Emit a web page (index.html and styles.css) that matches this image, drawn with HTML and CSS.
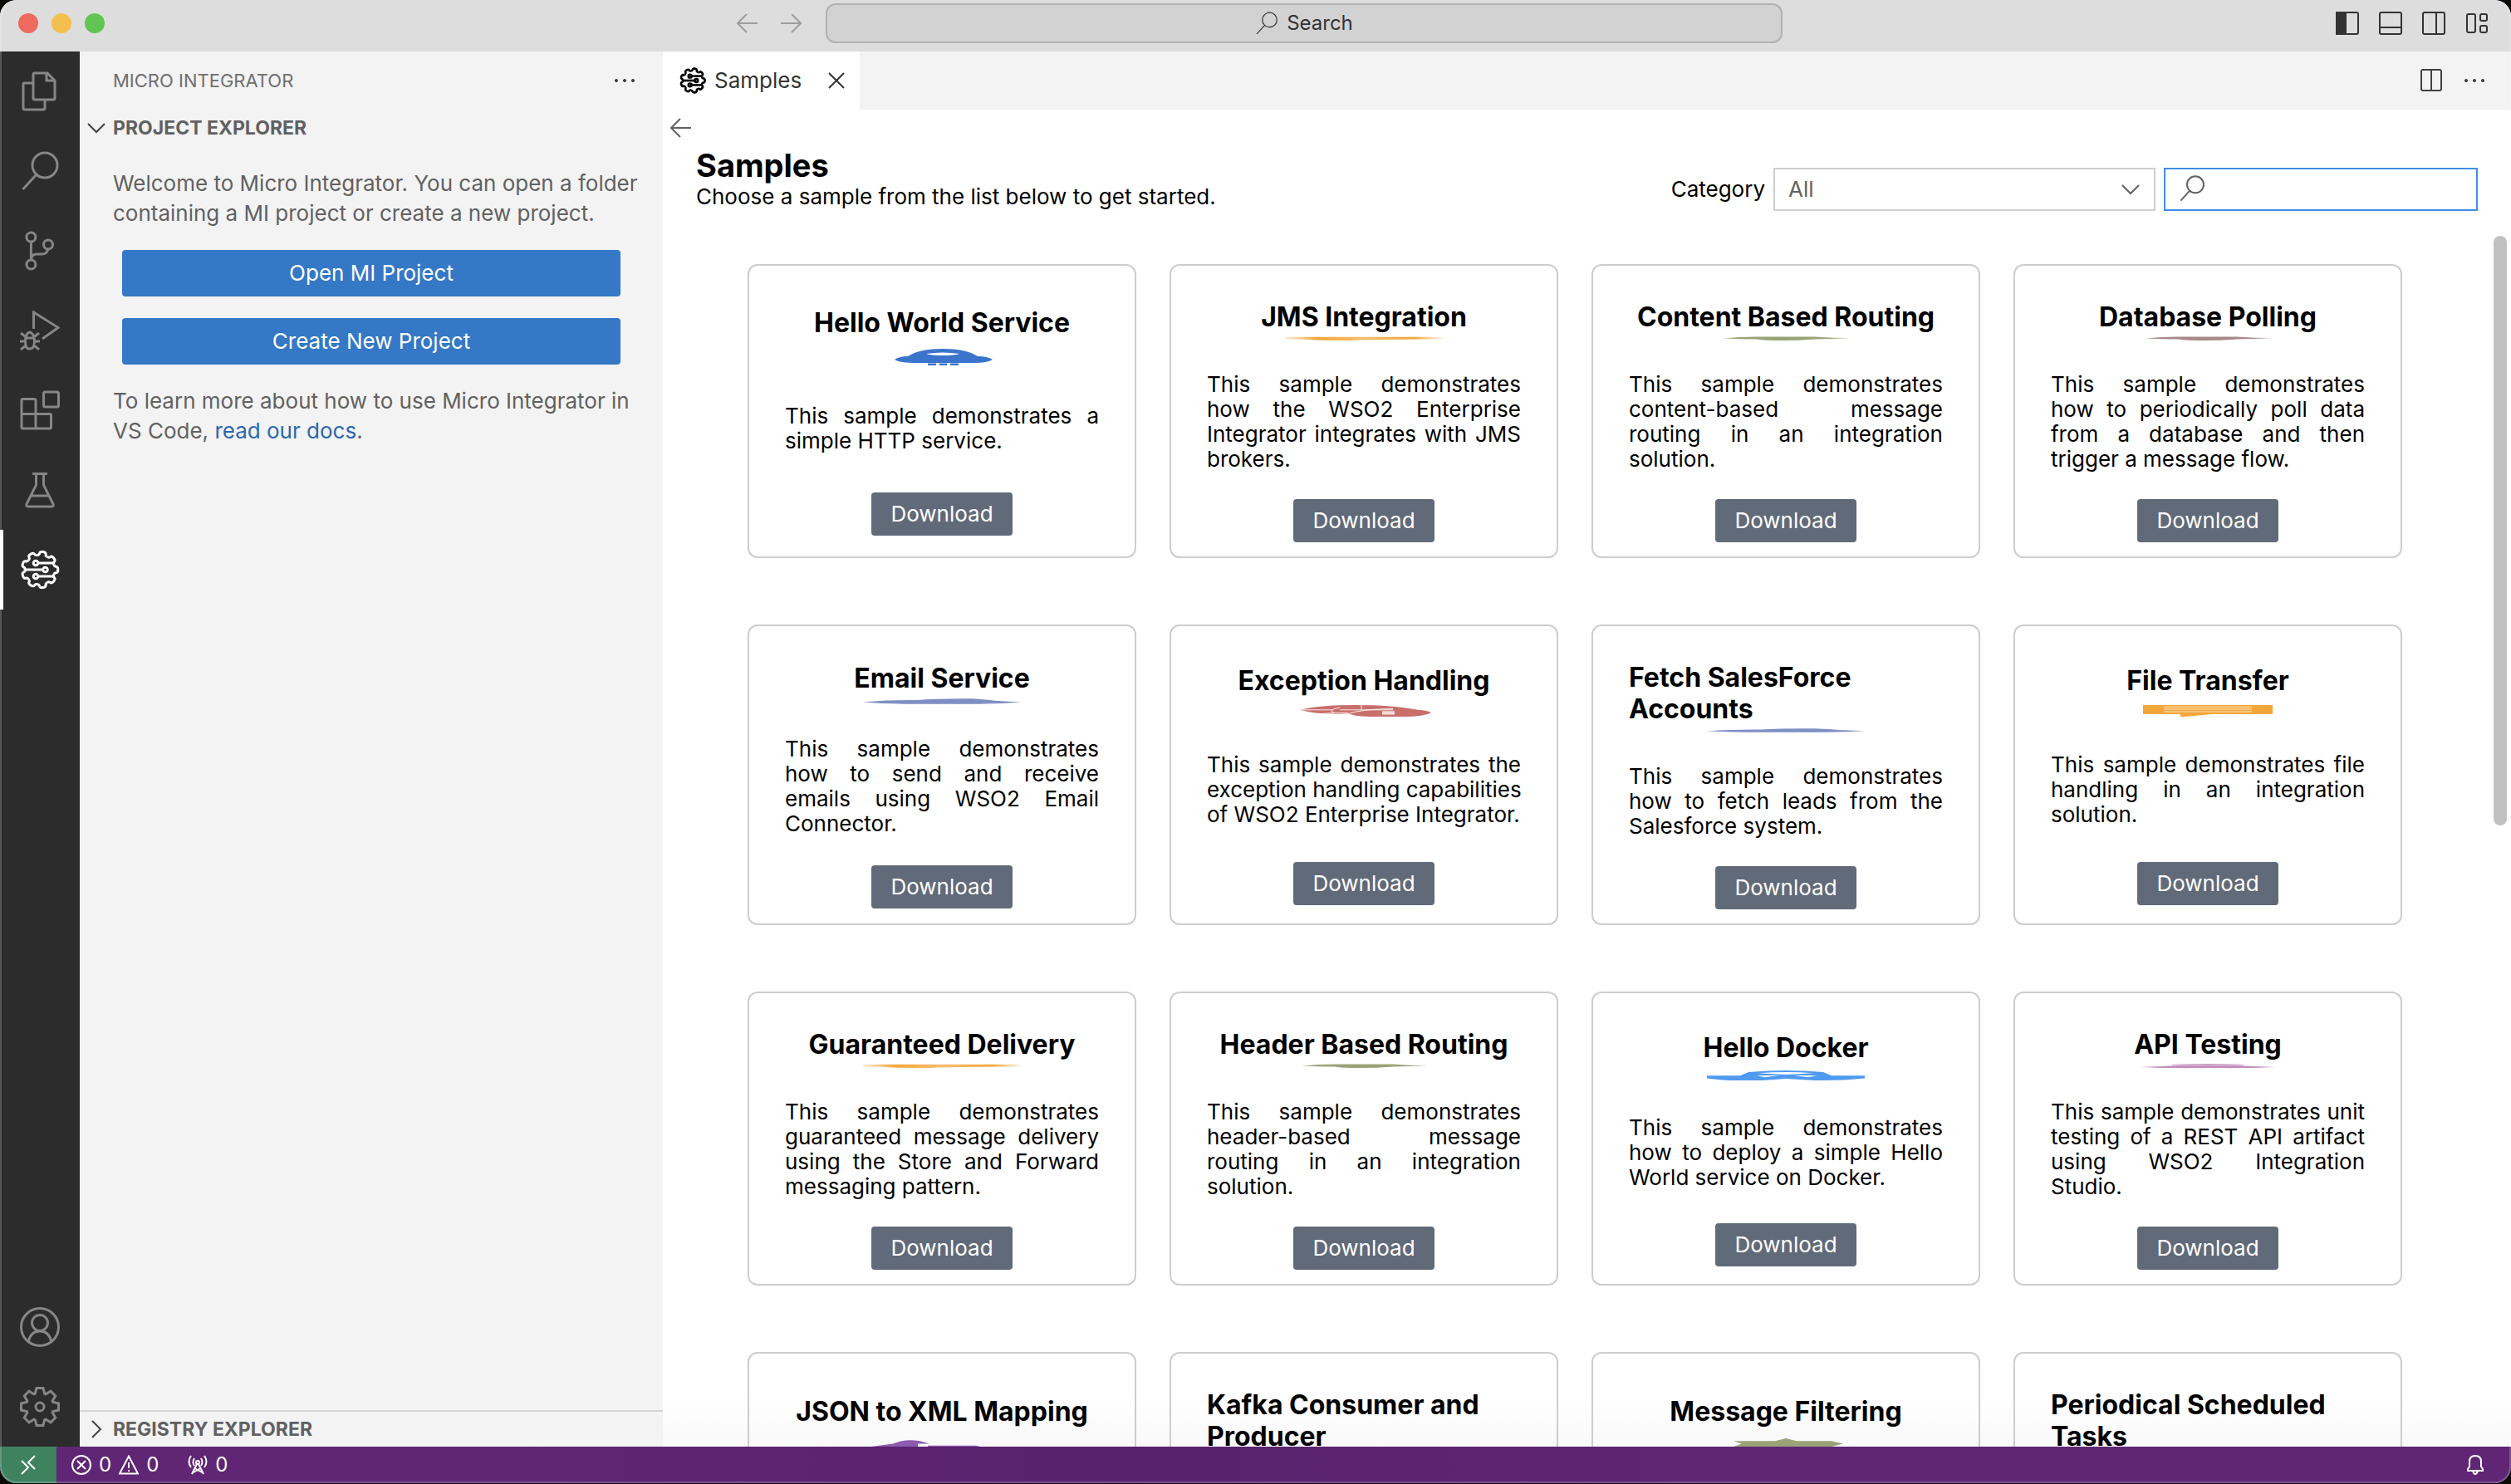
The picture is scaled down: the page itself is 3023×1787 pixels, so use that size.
FILE: index.html
```html
<!DOCTYPE html>
<html lang="en">
<head>
<meta charset="utf-8">
<title>Samples</title>
<link rel="stylesheet" href="styles.css">
</head>
<body>
<svg class="defs" aria-hidden="true">
  <defs>
    <path id="mi-tooth" d="M16.9-6.2Q17.3-3.8 19.5-3.8Q21.8-3.6 21.8 0Q21.8 3.6 19.5 3.8Q17.3 3.8 16.9 6.2"/>
    <path id="gear-tooth" d="M14.5-6L22.5-4V4L14.5 6"/>
    <symbol id="i-mi" viewBox="0 0 48 48">
      <g transform="translate(24 24)">
        <use href="#mi-tooth"/><use href="#mi-tooth" transform="rotate(40)"/><use href="#mi-tooth" transform="rotate(80)"/>
        <use href="#mi-tooth" transform="rotate(120)"/><use href="#mi-tooth" transform="rotate(160)"/><use href="#mi-tooth" transform="rotate(200)"/>
        <use href="#mi-tooth" transform="rotate(240)"/><use href="#mi-tooth" transform="rotate(280)"/><use href="#mi-tooth" transform="rotate(320)"/>
      </g>
      <circle cx="19" cy="16" r="2.8"/><path d="M22 16H41"/>
      <circle cx="30.5" cy="24" r="2.8"/><path d="M6 24H27.5"/>
      <circle cx="19" cy="32" r="2.8"/><path d="M22 32H41"/>
    </symbol>
    <symbol id="i-search" viewBox="0 0 48 48"><circle cx="30" cy="17" r="15"/><path d="M20 28L3.500 46"/></symbol>
    <symbol id="i-left" viewBox="0 0 32 32"><path d="M15 5L4 16L15 27M4 16H28"/></symbol>
    <symbol id="i-right" viewBox="0 0 32 32"><path d="M17 5L28 16L17 27M28 16H4"/></symbol>
    <symbol id="i-dots" viewBox="0 0 32 32"><circle cx="6" cy="16" r="1.600"/><circle cx="16" cy="16" r="1.600"/><circle cx="26" cy="16" r="1.600"/></symbol>
    <linearGradient id="g-orange"><stop offset="0" stop-color="#f4a63a" stop-opacity=".2"/><stop offset=".2" stop-color="#f4a63a"/><stop offset=".5" stop-color="#f8bd70"/><stop offset=".82" stop-color="#f4a63a"/><stop offset="1" stop-color="#f4a63a" stop-opacity=".1"/></linearGradient>
    <symbol id="a-swoosh" viewBox="0 0 190 20" preserveAspectRatio="none"><path fill="url(#g-orange)" d="M0 3H190V14H160Q90 16 80 20Q40 20 20 14H0z"/></symbol>
    <symbol id="a-leaf" viewBox="0 0 190 20" preserveAspectRatio="none"><path fill="currentColor" d="M20 10Q40 2 60 2H130Q150 8 172 8Q150 12 130 14Q110 20 90 20Q70 20 60 14Q40 14 20 10z"/></symbol>
    <symbol id="a-cloud" viewBox="0 0 190 20" preserveAspectRatio="none"><path fill="currentColor" d="M0 13Q30 5 65 6Q90 0 130 1Q150 4 158 8L190 13Q170 18 140 19H50Q20 18 0 13z"/></symbol>
  </defs>
</svg>

<div class="window">
  <header class="titlebar">
    <div class="lights"><span class="light red"></span><span class="light yellow"></span><span class="light green"></span></div>
    <nav class="history" aria-label="History">
      <button class="plain" aria-label="Back"><svg class="icon s32"><use href="#i-left"/></svg></button>
      <button class="plain" aria-label="Forward"><svg class="icon s32"><use href="#i-right"/></svg></button>
    </nav>
    <button class="command"><svg class="icon s28"><use href="#i-search"/></svg>Search</button>
    <div class="layout-tools">
      <button class="plain" aria-label="Toggle side bar"><svg class="icon s32" viewBox="0 0 32 32"><rect x="3" y="3" width="26" height="26" rx="2"/><path class="solid" d="M3 3H14V29H3z"/></svg></button>
      <button class="plain" aria-label="Toggle panel"><svg class="icon s32" viewBox="0 0 32 32"><rect x="3" y="3" width="26" height="26" rx="2"/><path d="M3 21H29"/></svg></button>
      <button class="plain" aria-label="Toggle secondary side bar"><svg class="icon s32" viewBox="0 0 32 32"><rect x="3" y="3" width="26" height="26" rx="2"/><path d="M19 3V29"/></svg></button>
      <button class="plain" aria-label="Customize layout"><svg class="icon s32" viewBox="0 0 32 32"><rect x="4" y="5" width="10" height="22" rx="2"/><rect x="20" y="5" width="8" height="8" rx="2"/><rect x="20" y="19" width="8" height="8" rx="2"/></svg></button>
    </div>
  </header>

  <div class="workbench">
    <nav class="activity" aria-label="Views">
      <button class="view" aria-label="Explorer"><svg class="icon s48" viewBox="0 0 48 48"><path d="M17 2H33L42 11V32Q42 34 40 34H18Q16 34 16 32V3zM32 2V11H42M16 14H5Q4 14 4 16V44Q4 46 6 46H28Q30 46 30 44V34"/></svg></button>
      <button class="view" aria-label="Search"><svg class="icon s48"><use href="#i-search"/></svg></button>
      <button class="view" aria-label="Source control"><svg class="icon s48" viewBox="0 0 48 48"><circle cx="13.400" cy="7.500" r="5.500"/><circle cx="34" cy="16.500" r="5.500"/><circle cx="13.400" cy="40.500" r="5.500"/><path d="M13.400 13V35Q14 28 20 28H27Q32 28 34 22"/></svg></button>
      <button class="view" aria-label="Run and debug"><svg class="icon s48" viewBox="0 0 48 48"><path d="M16.500 22V2L46 20.500L27 34"/><path d="M12 26Q6.500 27 6.500 37T12 46Q17.500 46 17.500 37T12 26zM7 33H17M1 27L6 31M23 27L18 31M0 37H6M18 37H24M1 47L7 42M23 47L17 42"/></svg></button>
      <button class="view" aria-label="Extensions"><svg class="icon s48" viewBox="0 0 48 48"><path d="M19 28.500V12Q19 10.500 17.500 10.500H3.500Q2 10.500 2 12V44.500Q2 46 3.500 46H36Q37.500 46 37.500 44.500V30Q37.500 28.500 36 28.500H2M19 28.500V46"/><rect x="28.500" y="2" width="18" height="18" rx="2"/></svg></button>
      <button class="view" aria-label="Testing"><svg class="icon s48" viewBox="0 0 48 48"><path d="M15 4.500H33M19.500 4.500V18L8 41Q7 44 10 44H38Q41 44 40 41L28.500 18V4.500M13.500 31H34.500"/></svg></button>
      <button class="view active" aria-label="Micro Integrator"><svg class="icon s48"><use href="#i-mi"/></svg></button>
      <span class="spacer"></span>
      <button class="view" aria-label="Accounts"><svg class="icon s48" viewBox="0 0 48 48"><circle cx="24" cy="24" r="22.500"/><circle cx="24" cy="19" r="9.500"/><path d="M10.500 41Q13 29 24 29T37.500 41"/></svg></button>
      <button class="view" aria-label="Manage"><svg class="icon s48" viewBox="0 0 48 48"><g transform="translate(24 24)"><use href="#gear-tooth"/><use href="#gear-tooth" transform="rotate(45)"/><use href="#gear-tooth" transform="rotate(90)"/><use href="#gear-tooth" transform="rotate(135)"/><use href="#gear-tooth" transform="rotate(180)"/><use href="#gear-tooth" transform="rotate(225)"/><use href="#gear-tooth" transform="rotate(270)"/><use href="#gear-tooth" transform="rotate(315)"/><circle r="5"/></g></svg></button>
    </nav>

    <aside class="sidebar">
      <div class="sidebar-title"><span>MICRO INTEGRATOR</span><button class="plain" aria-label="More actions"><svg class="icon s32 dots"><use href="#i-dots"/></svg></button></div>
      <button class="section"><svg class="icon s24" viewBox="0 0 24 24"><path d="M2 7L12 17L22 7"/></svg>PROJECT EXPLORER</button>
      <div class="welcome">
        <p>Welcome to Micro Integrator. You can open a folder containing a MI project or create a new project.</p>
        <button class="primary">Open MI Project</button>
        <button class="primary">Create New Project</button>
        <p>To learn more about how to use Micro Integrator in VS Code, <a href="#docs">read our docs</a>.</p>
      </div>
      <span class="spacer"></span>
      <button class="section registry"><svg class="icon s24" viewBox="0 0 24 24"><path d="M7 2L17 12L7 22"/></svg>REGISTRY EXPLORER</button>
    </aside>

    <section class="editor">
      <div class="tabs">
        <div class="tab"><svg class="icon s32 tab-mark"><use href="#i-mi"/></svg><span>Samples</span><button class="plain" aria-label="Close tab"><svg class="icon s24" viewBox="0 0 24 24"><path d="M3 3L21 21M21 3L3 21"/></svg></button></div>
        <div class="tab-tools">
          <button class="plain" aria-label="Split editor"><svg class="icon s32" viewBox="0 0 32 32"><rect x="4" y="3" width="24" height="25" rx="2"/><path d="M16 3V28"/></svg></button>
          <button class="plain" aria-label="More actions"><svg class="icon s32 dots"><use href="#i-dots"/></svg></button>
        </div>
      </div>

      <main class="page">
        <div class="back-row"><button class="plain" aria-label="Back"><svg class="icon s32"><use href="#i-left"/></svg></button></div>
        <div class="page-head">
          <div><h1>Samples</h1><p>Choose a sample from the list below to get started.</p></div>
          <form class="filters">
            <label for="category">Category</label>
            <span class="field category"><select id="category"><option>All</option></select><svg class="icon s24" viewBox="0 0 24 24"><path d="M2 7L12 17L22 7"/></svg></span>
            <span class="field query"><svg class="icon s32"><use href="#i-search"/></svg><input type="text" aria-label="Search samples"></span>
          </form>
        </div>

        <div class="grid">
          <article class="card">
            <h2>Hello World Service</h2>
            <div class="art blue"><svg viewBox="0 0 190 20" preserveAspectRatio="none"><path fill="currentColor" fill-rule="evenodd" d="M38 13Q44 9 54 9Q68 0 96 0T138 9Q150 9 156 13Q150 17 134 17H64Q44 17 38 13zM76 6Q96 3 116 6Q110 8 96 8T76 6z"/><path fill="currentColor" d="M78 17.500H88V20H78zM92 17.500H101V20H92zM105 17.500H115V20H105z"/></svg></div>
            <p>This sample demonstrates a simple HTTP service.</p>
            <button class="download">Download</button>
          </article>
          <article class="card">
            <h2>JMS Integration</h2>
            <div class="art"><svg><use href="#a-swoosh"/></svg></div>
            <p>This sample demonstrates how the WSO2 Enterprise Integrator integrates with JMS brokers.</p>
            <button class="download">Download</button>
          </article>
          <article class="card">
            <h2>Content Based Routing</h2>
            <div class="art olive"><svg><use href="#a-leaf"/></svg></div>
            <p>This sample demonstrates content-based message routing in an integration solution.</p>
            <button class="download">Download</button>
          </article>
          <article class="card">
            <h2>Database Polling</h2>
            <div class="art brown"><svg><use href="#a-leaf"/></svg></div>
            <p>This sample demonstrates how to periodically poll data from a database and then trigger a message flow.</p>
            <button class="download">Download</button>
          </article>

          <article class="card">
            <h2>Email Service</h2>
            <div class="art indigo"><svg><use href="#a-cloud"/></svg></div>
            <p>This sample demonstrates how to send and receive emails using WSO2 Email Connector.</p>
            <button class="download">Download</button>
          </article>
          <article class="card">
            <h2>Exception Handling</h2>
            <div class="art red-art"><svg viewBox="0 0 190 20" preserveAspectRatio="none"><path fill="currentColor" d="M18 8Q40 0 85 0Q130 0 160 8Q172 9 176 13Q165 20 125 20Q85 20 76 14Q40 17 18 8z"/><path fill="none" stroke="#fff" stroke-width="1" d="M20 8H58M66 8H130M60 14Q50 8 66 4M75 15Q90 7 130 6M92 0V7M40 15Q60 12 76 13"/><path fill="#fff" fill-opacity=".75" d="M117 10H132V16H117z"/></svg></div>
            <p>This sample demonstrates the exception&nbsp;handling&nbsp;capabilities of WSO2 Enterprise Integrator.</p>
            <button class="download">Download</button>
          </article>
          <article class="card">
            <h2>Fetch SalesForce Accounts</h2>
            <div class="art indigo"><svg><use href="#a-cloud"/></svg></div>
            <p>This sample demonstrates how to fetch leads from the Salesforce system.</p>
            <button class="download">Download</button>
          </article>
          <article class="card">
            <h2>File Transfer</h2>
            <div class="art orange"><svg viewBox="0 0 190 20" preserveAspectRatio="none"><path fill="currentColor" d="M17 0H173V15H100L62 20V15H17z"/><path fill="none" stroke="#fbe3c0" stroke-width="1.500" d="M42 3H148M42 7H148M42 11H148"/></svg></div>
            <p>This sample demonstrates file handling in an integration solution.</p>
            <button class="download">Download</button>
          </article>

          <article class="card">
            <h2>Guaranteed Delivery</h2>
            <div class="art"><svg><use href="#a-swoosh"/></svg></div>
            <p>This sample demonstrates guaranteed message delivery using the Store and Forward messaging pattern.</p>
            <button class="download">Download</button>
          </article>
          <article class="card">
            <h2>Header Based Routing</h2>
            <div class="art olive"><svg><use href="#a-leaf"/></svg></div>
            <p>This sample demonstrates header-based message routing in an integration solution.</p>
            <button class="download">Download</button>
          </article>
          <article class="card">
            <h2>Hello Docker</h2>
            <div class="art sky"><svg viewBox="0 0 190 20" preserveAspectRatio="none"><path fill="currentColor" fill-rule="evenodd" d="M0 10H40L50 3Q95-3 140 3L150 10H190V15Q160 20 130 19L95 16L60 20Q20 20 0 15zM62 5Q95 1 128 5L95 8zM60 10L88 9L70 13zM104 9L132 10L122 13z"/></svg></div>
            <p>This sample demonstrates how to deploy a simple Hello World service on Docker.</p>
            <button class="download">Download</button>
          </article>
          <article class="card">
            <h2>API Testing</h2>
            <div class="art pink"><svg viewBox="0 0 190 20" preserveAspectRatio="none"><path fill="currentColor" d="M52 3Q95-3 138 3V6H52zM14 16Q40 12 60 8H130Q150 12 176 16L150 20H40z"/></svg></div>
            <p>This sample demonstrates unit testing of a REST API artifact using WSO2 Integration Studio.</p>
            <button class="download">Download</button>
          </article>

          <article class="card">
            <h2>JSON to XML Mapping</h2>
            <div class="art purple"><svg viewBox="0 0 190 20" preserveAspectRatio="none"><path fill="currentColor" d="M10 9L36 6Q56-2 80 6H66V20H48V9zM78 8H135Q146 9 146 14V20H74V14H124V11H78z"/></svg></div>
            <p>This sample demonstrates JSON to XML mapping.</p>
            <button class="download">Download</button>
          </article>
          <article class="card">
            <h2>Kafka Consumer and Producer</h2>
            <div class="art"><svg><use href="#a-leaf"/></svg></div>
            <p>This sample demonstrates how to produce and consume messages with Kafka.</p>
            <button class="download">Download</button>
          </article>
          <article class="card">
            <h2>Message Filtering</h2>
            <div class="art olive"><svg viewBox="0 0 190 20" preserveAspectRatio="none"><path fill="currentColor" d="M32 3H82L95 0L108 3H150L164 6L150 9H108V12H150L140 17H30L42 12H84V9H32L42 6z"/></svg></div>
            <p>This sample demonstrates message filtering.</p>
            <button class="download">Download</button>
          </article>
          <article class="card">
            <h2>Periodical Scheduled Tasks</h2>
            <div class="art indigo"><svg><use href="#a-leaf"/></svg></div>
            <p>This sample demonstrates how to schedule a task that runs periodically.</p>
            <button class="download">Download</button>
          </article>
        </div>
        <span class="scroll-thumb"></span>
      </main>
    </section>
  </div>

  <footer class="status">
    <button class="remote" aria-label="Remote window"><svg class="icon s24" viewBox="0 0 24 24"><path d="M4 7L12 15L4 23M20 1L12 9L20 17"/></svg></button>
    <button class="problems" aria-label="Problems"><svg class="icon s24" viewBox="0 0 24 24"><circle cx="12" cy="12" r="11"/><path d="M7 7L17 17M17 7L7 17"/></svg>0<svg class="icon s24" viewBox="0 0 24 24"><path d="M12 1.500L23 22.500H1zM12 9V16M12 18V20"/></svg>0</button>
    <button class="ports" aria-label="Forwarded ports"><svg class="icon s24" viewBox="0 0 24 24"><circle cx="12" cy="9" r="2"/><path d="M11 11L5 23M13 11L19 23M8.500 16L17 21M15.500 16L7 21M8 4Q5 9 8 13M16 4Q19 9 16 13M4 1Q-1 8 4 15M20 1Q25 8 20 15"/></svg>0</button>
    <span class="spacer"></span>
    <button class="bell" aria-label="Notifications"><svg class="icon s28" viewBox="0 0 28 28"><path d="M5 21V19L7 16V10Q7 3 14 3T21 10V16L23 19V21zM11 21Q12 25 14 25T17 21"/></svg></button>
  </footer>
</div>
</body>
</html>
```
FILE: styles.css
```css
* { box-sizing: border-box; }

body {
  margin: 0;
  padding-bottom: 1px;
  height: 100vh;
  background: #0c0a06;
  color: #000;
  font-family: Inter, "Liberation Sans", sans-serif;
  font-size: 26px;
  line-height: 30px;
}

h1, h2, p { margin: 0; }
button { font: inherit; color: inherit; border: 0; background: none; padding: 0; margin: 0; cursor: pointer; }
.defs { position: absolute; width: 0; height: 0; }
.spacer { flex: 1; }
.plain { display: flex; }

.icon { fill: none; stroke: currentColor; stroke-width: 2; flex: none; display: block; }
.icon .solid { fill: currentColor; }
.dots { fill: currentColor; stroke-width: 1; }
.s24 { width: 24px; height: 24px; }
.s28 { width: 28px; height: 28px; }
.s32 { width: 32px; height: 32px; }
.s48 { width: 48px; height: 48px; stroke-width: 3; }

.window {
  position: relative;
  display: flex;
  flex-direction: column;
  height: 100%;
  border-radius: 20px;
  overflow: hidden;
  background: #fff;
}
.window::after {
  content: "";
  position: absolute;
  inset: 0;
  border: 2px solid rgba(255, 255, 255, .2);
  border-top: 0;
  border-radius: 20px;
  pointer-events: none;
}

/* Title bar */
.titlebar {
  flex: none;
  display: grid;
  grid-template-columns: 872px 122px minmax(0, 1152px) 1fr;
  align-items: center;
  height: 62px;
  padding-bottom: 6px;
  background: #ddd;
  color: #333;
}
.lights { display: flex; gap: 16px; padding-left: 22px; }
.light { width: 24px; height: 24px; border-radius: 50%; }
.red { background: #ed6a5e; }
.yellow { background: #f5bf4f; }
.green { background: #61c554; }
.history { display: flex; gap: 20px; padding-left: 12px; color: #9d9d9d; }
.command {
  display: flex;
  align-items: center;
  justify-content: center;
  gap: 10px;
  height: 48px;
  border: 2px solid #b1b1b1;
  border-radius: 12px;
  background: #d2d2d2;
  font-size: 24px;
}
.layout-tools { display: flex; justify-content: flex-end; gap: 20px; padding-right: 25px; }

.workbench { flex: 1; min-height: 0; display: flex; }

/* Activity bar */
.activity { flex: none; width: 96px; display: flex; flex-direction: column; background: #2c2c2c; color: #868686; }
.view { height: 96px; display: grid; place-items: center; }
.view.active { color: #fff; box-shadow: inset 4px 0 #fff; }

/* Side bar */
.sidebar { flex: none; width: 702px; display: flex; flex-direction: column; background: #f3f3f3; color: #616161; }
.sidebar-title {
  display: flex;
  align-items: center;
  justify-content: space-between;
  height: 70px;
  padding: 0 30px 0 40px;
  font-size: 22px;
  color: #6f6f6f;
}
.sidebar-title .icon { color: #424242; }
.section {
  display: flex;
  align-items: center;
  gap: 8px;
  height: 44px;
  padding-left: 8px;
  font-size: 23px;
  font-weight: 700;
}
.section .icon { color: #424242; }
.registry { border-top: 2px solid #d6d6d6; }
.welcome { display: flex; flex-direction: column; gap: 26px; padding: 27px 20px 0 40px; line-height: 36px; }
.welcome a { color: #2b67b0; text-decoration: none; }
.primary { height: 56px; margin: 0 31px 0 11px; border-radius: 4px; background: #3478c6; color: #fff; }

/* Editor */
.editor { flex: 1; min-width: 0; display: flex; flex-direction: column; }
.tabs { flex: none; display: flex; justify-content: space-between; height: 70px; background: #f3f3f3; color: #424242; }
.tab { display: flex; align-items: center; padding: 0 16px 0 20px; background: #fff; color: #333; }
.tab-mark { color: #000; stroke-width: 4; margin-right: 10px; }
.tab .plain { margin-left: 30px; }
.tab-tools { display: flex; align-items: center; gap: 20px; padding-right: 28px; }

.page { position: relative; flex: 1; min-height: 0; overflow: hidden; background: linear-gradient(#fff calc(100% - 60px), #f9f9f9); }
.back-row { display: flex; align-items: center; height: 44px; padding-left: 6px; color: #616161; }
.page-head { display: flex; justify-content: space-between; align-items: flex-start; padding: 0 40px; margin-bottom: 64px; }
h1 { font-size: 38px; line-height: 46px; font-weight: 700; }
.filters { display: flex; align-items: center; gap: 10px; margin-top: 26px; }
.field { position: relative; display: flex; color: #616161; }
.field select, .field input {
  width: 100%;
  height: 52px;
  margin: 0;
  border: 2px solid #cecece;
  border-radius: 0;
  background: #fff;
  color: #616161;
  font: inherit;
  outline: 0;
  appearance: none;
}
.category { width: 460px; }
.category select { padding: 0 60px 0 16px; }
.category .icon { position: absolute; right: 18px; top: 14px; pointer-events: none; }
.query { width: 378px; }
.query input { border-color: #3f8ee8; padding: 0 16px 0 60px; }
.query .icon { position: absolute; left: 18px; top: 9px; stroke-width: 3; }

/* Sample cards: free height is shared between the gaps round each part */
.grid { display: grid; grid-template-columns: repeat(4, minmax(0, 1fr)); gap: 80px 40px; padding: 0 131px 0 102px; }
.card {
  display: flex;
  flex-direction: column;
  align-items: center;
  padding: 0 43px;
  border: 2px solid #cdcdcd;
  border-radius: 12px;
}
.card::before { content: ""; flex: 7 0 43px; }
.card::after { content: ""; flex: 8 0 17px; }
.card h2 { font-size: 32px; line-height: 38px; font-weight: 700; }
.card p { flex: 14 0 auto; align-self: stretch; padding-bottom: 33px; text-align: justify; }
.art { flex: 31 0 47px; display: flex; flex-direction: column; color: #f4a63a; }
.art::before { content: ""; flex: 8 0 4px; }
.art::after { content: ""; flex: 8 0 38px; }
.art svg { flex: 15 0 5px; width: 190px; height: 5px; }
.download { flex: none; width: 170px; height: 52px; border-radius: 4px; background: #616a79; color: #fff; }

.blue { color: #3a74cc; }
.olive { color: #9aa377; }
.brown { color: #a98989; }
.indigo { color: #7f8fc4; }
.red-art { color: #c96f6b; }
.orange { color: #f4a63a; }
.sky { color: #4f9af0; }
.pink { color: #c48fc0; }
.purple { color: #8e5bb0; }

.scroll-thumb { position: absolute; top: 152px; right: 5px; width: 16px; height: 710px; border-radius: 8px; background: #c1c1c1; }

/* Status bar */
.status { flex: none; display: flex; height: 44px; background: linear-gradient(90deg, #602575 20%, #58226c 45%, #602575 70%); color: #fff; font-size: 24px; }
.status button { display: flex; align-items: center; gap: 9px; }
.status .remote { width: 68px; justify-content: center; background: #3f8260; }
.status .problems { margin-left: 18px; }
.status .ports { margin-left: 35px; }
.status .bell { margin-right: 29px; }
```
